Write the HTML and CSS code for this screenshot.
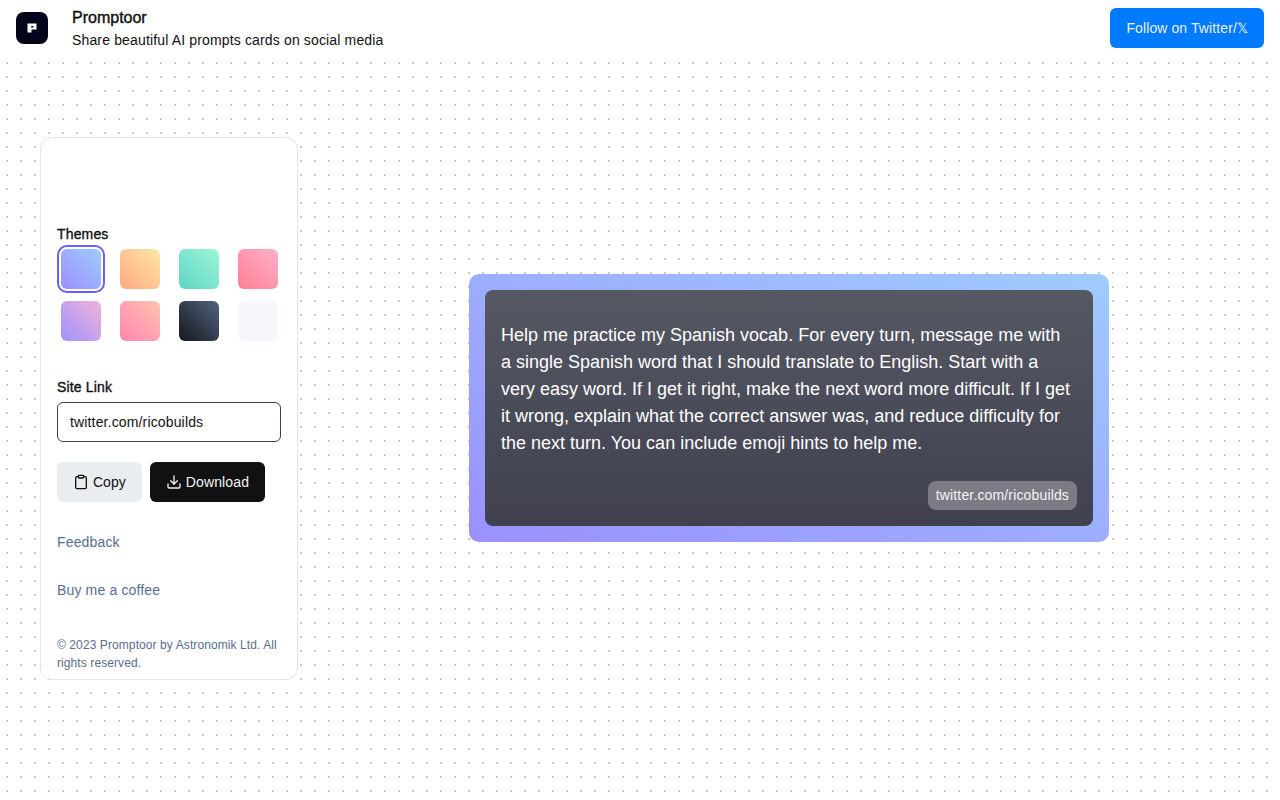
FILE: index.html
```html
<!DOCTYPE html>
<html lang="en">
<head>
  <meta charset="UTF-8">
  <meta name="viewport" content="width=device-width, initial-scale=1.0">
  <title>Promptoor</title>
  <link rel="stylesheet" href="styles.css">
</head>
<body>
  <header class="topbar">
    <div class="brand">
      <svg class="logo" width="32" height="32" viewBox="0 0 32 32">
        <rect width="32" height="32" rx="8" fill="#03031a"/>
        <path fill="#fff" fill-rule="evenodd" d="M11.5 11.5h9v6h-5v3h-4zM15.2 14h2.2v1.4h-2.2z"/>
      </svg>
      <div>
        <div class="brand-name">Promptoor</div>
        <div class="brand-tagline">Share beautiful AI prompts cards on social media</div>
      </div>
    </div>
    <a class="follow-btn" href="#">Follow on Twitter/𝕏</a>
  </header>

  <main class="main">
    <aside class="panel">
      <div class="panel-spacer"></div>

      <div class="field-label">Themes</div>
      <div class="themes">
        <button class="theme selected"><span class="swatch t-blue"></span></button>
        <button class="theme"><span class="swatch t-peach"></span></button>
        <button class="theme"><span class="swatch t-mint"></span></button>
        <button class="theme"><span class="swatch t-rose"></span></button>
        <button class="theme"><span class="swatch t-violet"></span></button>
        <button class="theme"><span class="swatch t-pink"></span></button>
        <button class="theme"><span class="swatch t-dark"></span></button>
        <button class="theme"><span class="swatch t-light"></span></button>
      </div>

      <label class="field-label site-label" for="site">Site Link</label>
      <input class="site-input" id="site" type="text" value="twitter.com/ricobuilds">

      <div class="actions">
        <button class="btn btn-copy">
          <svg width="16" height="16" viewBox="0 0 24 24" fill="none" stroke="currentColor" stroke-width="2" stroke-linecap="round" stroke-linejoin="round">
            <rect x="8" y="2" width="8" height="4" rx="1"/>
            <path d="M16 4h2a2 2 0 0 1 2 2v14a2 2 0 0 1-2 2H6a2 2 0 0 1-2-2V6a2 2 0 0 1 2-2h2"/>
          </svg>
          Copy
        </button>
        <button class="btn btn-download">
          <svg width="16" height="16" viewBox="0 0 24 24" fill="none" stroke="currentColor" stroke-width="2" stroke-linecap="round" stroke-linejoin="round">
            <path d="M21 15v4a2 2 0 0 1-2 2H5a2 2 0 0 1-2-2v-4"/>
            <path d="M7 10l5 5 5-5"/>
            <path d="M12 15V3"/>
          </svg>
          Download
        </button>
      </div>

      <a class="panel-link feedback" href="#">Feedback</a>
      <a class="panel-link coffee" href="#">Buy me a coffee</a>

      <p class="copyright">© 2023 Promptoor by Astronomik Ltd. All rights reserved.</p>
    </aside>

    <section class="stage">
      <div class="card">
        <div class="card-inner">
          <p class="prompt">Help me practice my Spanish vocab. For every turn, message me with a single Spanish word that I should translate to English. Start with a very easy word. If I get it right, make the next word more difficult. If I get it wrong, explain what the correct answer was, and reduce difficulty for the next turn. You can include emoji hints to help me.</p>
          <div class="card-footer">
            <span class="site-badge">twitter.com/ricobuilds</span>
          </div>
        </div>
      </div>
    </section>
  </main>
</body>
</html>
```

FILE: styles.css
```css
* {
  box-sizing: border-box;
}
body {
  margin: 0;
  min-height: 800px;
  font-family: "Liberation Sans", Arial, sans-serif;
  font-size: 14px;
  letter-spacing: 0.15px;
  color: #111;
  background-color: #fff;
  background-image: radial-gradient(circle, #c8c8c8 1px, transparent 1px);
  background-size: 14px 14px;
}
a {
  text-decoration: none;
}
button {
  font-family: inherit;
  border: none;
  cursor: pointer;
}

.topbar {
  display: flex;
  align-items: center;
  justify-content: space-between;
  height: 56px;
  padding: 0 16px;
  background: #fff;
}
.brand {
  display: flex;
  align-items: center;
  gap: 24px;
}
.logo {
  display: block;
}
.brand-name {
  font-size: 16px;
  line-height: 24px;
  letter-spacing: 0;
  -webkit-text-stroke: 0.4px #111;
}
.brand-tagline {
  font-size: 14px;
  line-height: 20px;
}
.follow-btn {
  display: flex;
  align-items: center;
  height: 40px;
  padding: 0 16px;
  border-radius: 6px;
  background: #007aff;
  color: #e8f2ff;
  font-size: 14px;
  letter-spacing: 0.1px;
}

.main {
  display: flex;
  align-items: center;
  height: 704px;
  padding-left: 40px;
}
.panel {
  width: 258px;
  padding: 16px 16px 7px;
  background: #fff;
  border: 1px solid #e2e5ea;
  border-radius: 12px;
}
.panel-spacer {
  height: 70px;
}
.field-label {
  display: block;
  font-size: 14px;
  line-height: 20px;
  -webkit-text-stroke: 0.35px #111;
}
.themes {
  display: grid;
  grid-template-columns: repeat(4, 48px);
  column-gap: 11px;
  row-gap: 4px;
  margin-top: 1px;
}
.theme {
  width: 48px;
  height: 48px;
  padding: 2px;
  border: 2px solid transparent;
  border-radius: 10px;
  background: none;
}
.theme.selected {
  border-color: #6a5eff;
}
.swatch {
  display: block;
  width: 40px;
  height: 40px;
  border-radius: 6px;
}
.t-blue { background: linear-gradient(to top right, #9a90ff, #9fcbff); }
.t-peach { background: linear-gradient(to top right, #ffa97f, #ffe6a8); }
.t-mint { background: linear-gradient(to top right, #5cd6c5, #9ef5d6); }
.t-rose { background: linear-gradient(to top right, #ff7f93, #ffb0cb); }
.t-violet { background: linear-gradient(to top right, #a093ff, #f0b3d6); }
.t-pink { background: linear-gradient(to top right, #ff85b0, #ffc4b0); }
.t-dark { background: linear-gradient(to top right, #15171c, #536480); }
.t-light { background: #f5f7fc; }

.site-label {
  margin-top: 32px;
}
.site-input {
  display: block;
  width: 100%;
  height: 40px;
  margin-top: 5px;
  padding: 0 12px;
  border: 1px solid #334155;
  border-radius: 6px;
  background: #fff;
  color: #111;
  font-family: inherit;
  font-size: 14px;
  letter-spacing: 0.15px;
}
.actions {
  display: flex;
  gap: 8px;
  margin-top: 20px;
}
.btn {
  display: flex;
  align-items: center;
  gap: 4px;
  height: 40px;
  padding: 0 16px;
  border-radius: 6px;
  font-size: 14px;
}
.btn-copy {
  background: #e9ecf1;
  color: #111;
}
.btn-download {
  background: #111;
  color: #f1f3f6;
  letter-spacing: 0.15px;
}
.panel-link {
  display: block;
  font-size: 14px;
  line-height: 20px;
  color: #5a6d8f;
}
.feedback {
  margin-top: 30px;
}
.coffee {
  margin-top: 28px;
}
.copyright {
  margin: 36px 0 0;
  font-size: 12px;
  line-height: 18px;
  letter-spacing: 0.09px;
  color: #5a6d8f;
}

.stage {
  flex: 1;
  display: flex;
  justify-content: center;
}
.card {
  width: 640px;
  padding: 16px;
  border-radius: 10px;
  background: linear-gradient(to top right, #9a90ff, #9fcbff);
}
.card-inner {
  padding: 32px 16px 16px;
  border-radius: 8px;
  background: linear-gradient(to bottom, #565864, #40404e);
}
.prompt {
  max-width: 572px;
  margin: 0;
  font-size: 18px;
  line-height: 27px;
  letter-spacing: 0;
  color: #fff;
}
.card-footer {
  display: flex;
  justify-content: flex-end;
  margin-top: 24px;
}
.site-badge {
  padding: 4px 8px;
  border-radius: 8px;
  background: rgba(255, 255, 255, 0.3);
  color: #f5f5f8;
  font-size: 14px;
  line-height: 21px;
}
```
